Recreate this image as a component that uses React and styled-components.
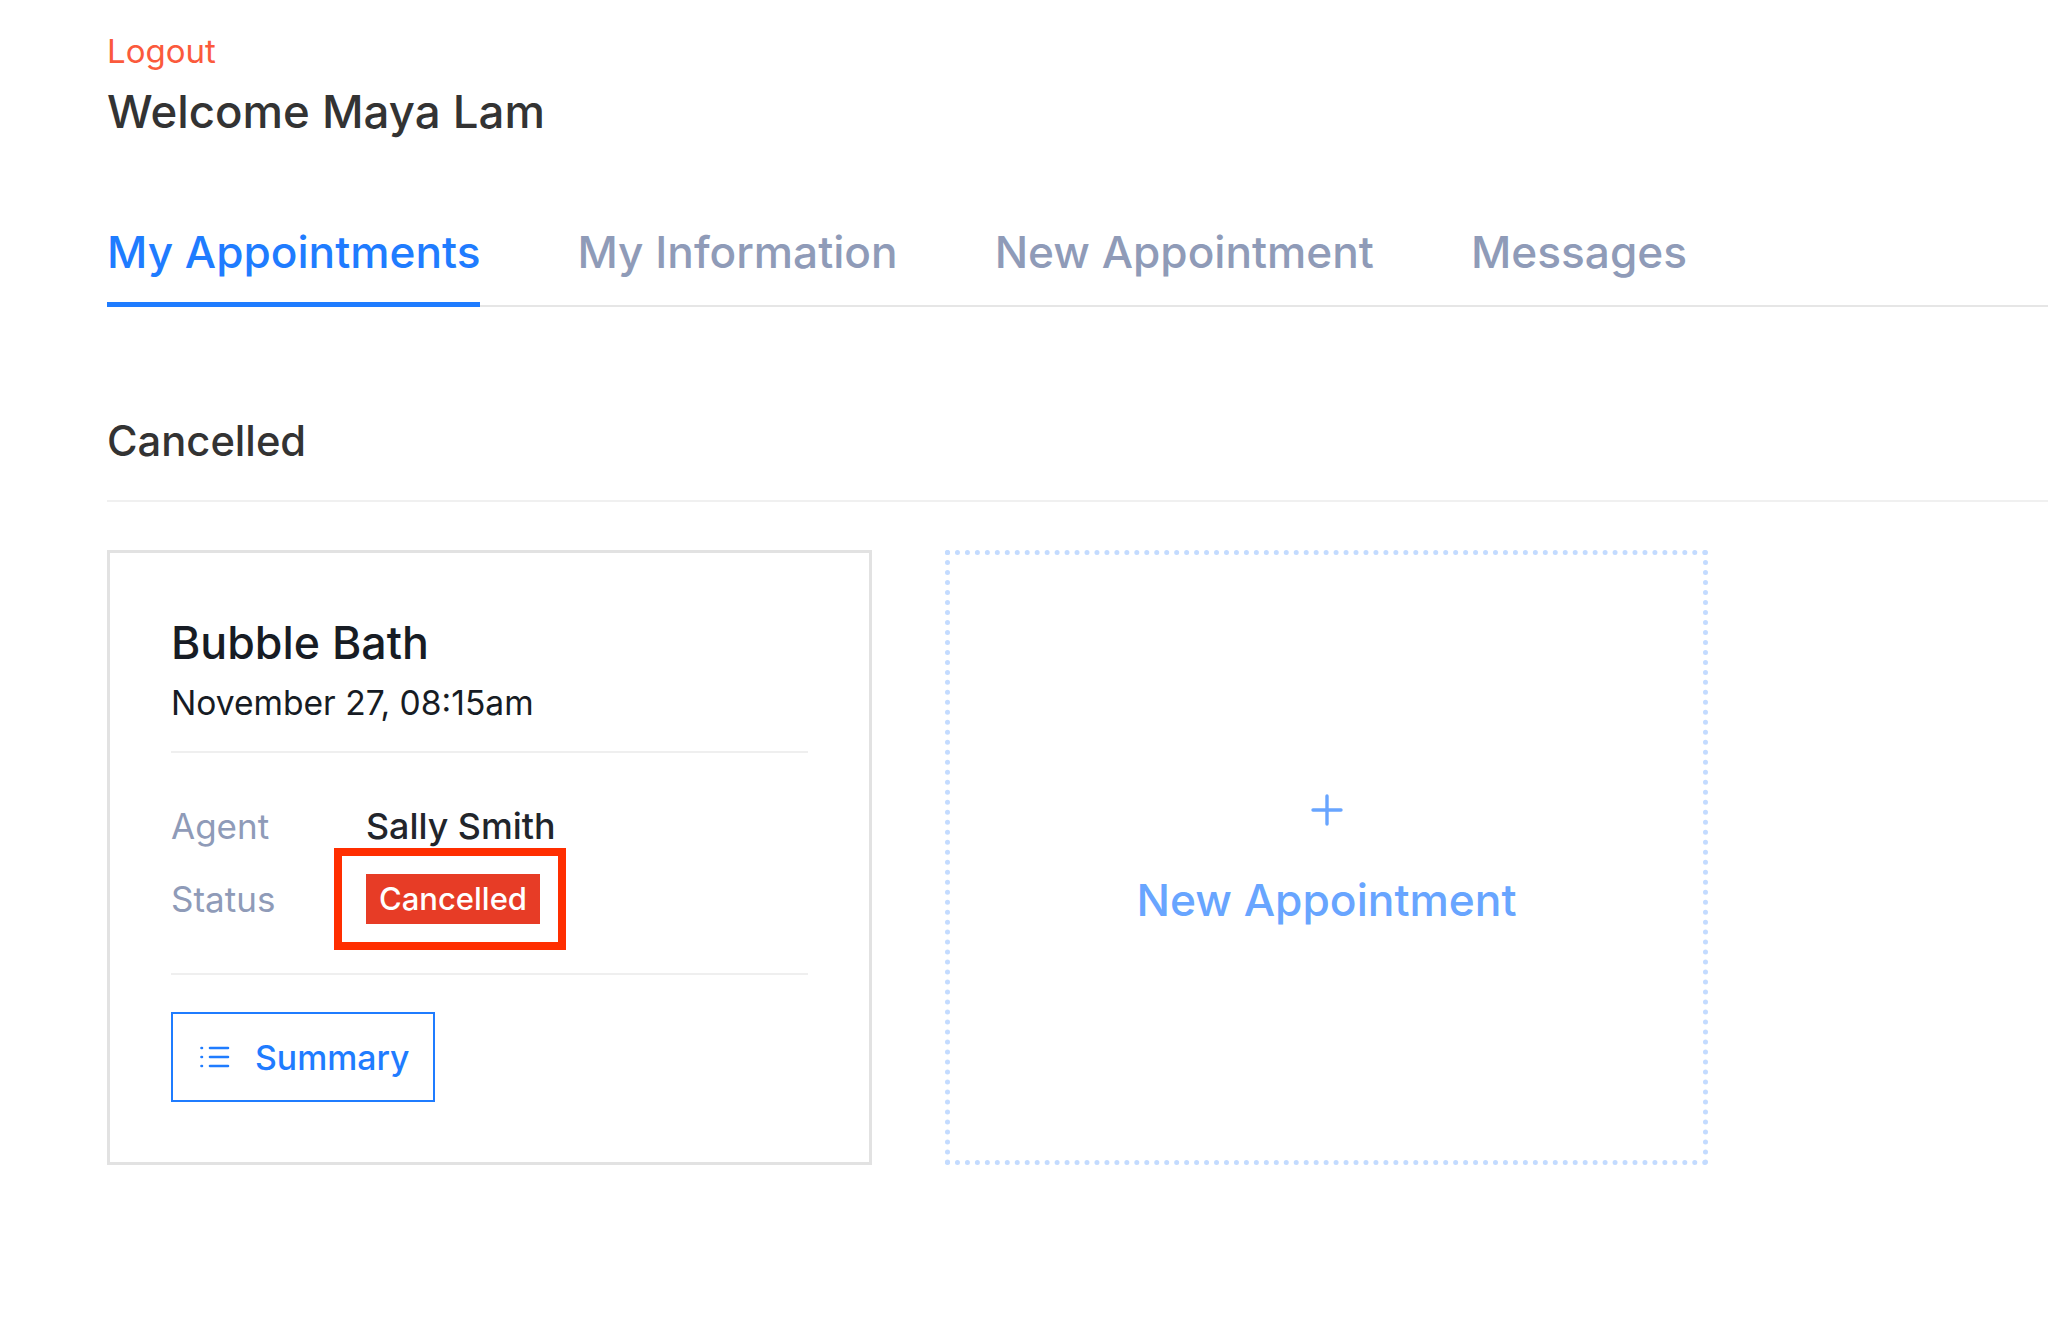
import React from 'react';
import styled, { createGlobalStyle } from 'styled-components';

const GlobalStyle = createGlobalStyle`
  html, body {
    margin: 0;
    padding: 0;
    background: #fff;
    font-family: 'Inter', 'Liberation Sans', sans-serif;
  }
`;

const Page = styled.div`
  width: 2048px;
  height: 1331px;
  box-sizing: border-box;
  padding: 30px 0 0 107px;
  overflow: hidden;
`;

const LogoutLink = styled.a`
  display: block;
  font-size: 33px;
  line-height: 42px;
  color: #fb5a3c;
`;

const Welcome = styled.h1`
  margin: 10px 0 0;
  font-size: 45.6px;
  line-height: 60px;
  font-weight: 450;
  color: #333;
`;

const Tabs = styled.div`
  display: flex;
  gap: 97px;
  margin-top: 75px;
  height: 90px;
  box-sizing: border-box;
  border-bottom: 2px solid #e6e6e6;
`;

const Tab = styled.div`
  height: 90px;
  box-sizing: border-box;
  font-size: 44.2px;
  line-height: 70px;
  font-weight: 480;
  color: ${(p) => (p.$active ? '#1f7cff' : '#8f9bb8')};
  border-bottom: ${(p) => (p.$active ? '5px solid #1f7cff' : 'none')};
`;

const SectionTitle = styled.h2`
  margin: 106px 0 0;
  font-size: 41.7px;
  line-height: 56px;
  font-weight: 480;
  color: #333;
  padding-bottom: 31px;
  border-bottom: 2px solid #f0f0f0;
`;

const Cards = styled.div`
  display: flex;
  gap: 73px;
  margin-top: 48px;
`;

const Card = styled.div`
  position: relative;
  width: 765px;
  height: 615px;
  box-sizing: border-box;
  border: 3px solid #e2e2e2;
  padding: 63px 61px 0;
`;

const CardTitle = styled.h3`
  margin: 0;
  font-size: 44.7px;
  line-height: 54px;
  font-weight: 480;
  color: #171c24;
`;

const CardDate = styled.div`
  margin-top: 10px;
  font-size: 33.6px;
  line-height: 46px;
  color: #171c24;
`;

const Divider = styled.div`
  height: 2px;
  background: #efefef;
`;

const HeadDivider = styled(Divider)`
  margin-top: 25px;
`;

const Details = styled.div`
  display: grid;
  grid-template-columns: 195px 1fr;
  grid-auto-rows: 73px;
  align-items: center;
  margin-top: 36px;
  margin-bottom: 38px;
`;

const Label = styled.div`
  font-size: 35px;
  color: #8f9bb8;
`;

const Value = styled.div`
  font-size: 35.8px;
  font-weight: 480;
  color: #22252b;
`;

const Badge = styled.span`
  display: inline-block;
  width: 174px;
  height: 50px;
  text-align: center;
  font-size: 31px;
  line-height: 50px;
  font-weight: 480;
  color: #fff;
  background: #e73c26;
`;

const Annotation = styled.div`
  position: absolute;
  left: 224px;
  top: 295px;
  width: 232px;
  height: 102px;
  box-sizing: border-box;
  border: 8px solid #ff2e00;
`;

const SummaryButton = styled.button`
  display: flex;
  align-items: center;
  gap: 25px;
  margin-top: 37px;
  width: 264px;
  height: 90px;
  box-sizing: border-box;
  padding: 0 0 0 27px;
  background: #fff;
  border: 2px solid #1f7cff;
  font-family: inherit;
  font-size: 33.8px;
  font-weight: 480;
  color: #1f7cff;
`;

const NewCard = styled.div`
  width: 763px;
  height: 615px;
  box-sizing: border-box;
  border: 5px dotted #c3dbff;
  display: flex;
  flex-direction: column;
  align-items: center;
  padding-top: 239px;
  font-size: 44.3px;
  font-weight: 480;
  color: #68a5ff;
`;

const NewLabel = styled.div`
  margin-top: 44px;
  line-height: 60px;
`;

const ListIcon = () => (
  <svg width="30" height="22" viewBox="0 0 30 22" fill="none" stroke="currentColor" strokeWidth="2.6" strokeLinecap="round">
    <path d="M10 2h18M10 11h18M10 20h18" />
    <path d="M1.5 2h.5M1.5 11h.5M1.5 20h.5" />
  </svg>
);

const PlusIcon = () => (
  <svg width="32" height="32" viewBox="0 0 32 32" fill="none" stroke="currentColor" strokeWidth="3.4" strokeLinecap="round">
    <path d="M16 2v28M2 16h28" />
  </svg>
);

const App = () => (
  <Page>
    <GlobalStyle />
    <LogoutLink>Logout</LogoutLink>
    <Welcome>Welcome Maya Lam</Welcome>
    <Tabs>
      <Tab $active>My Appointments</Tab>
      <Tab>My Information</Tab>
      <Tab>New Appointment</Tab>
      <Tab>Messages</Tab>
    </Tabs>
    <SectionTitle>Cancelled</SectionTitle>
    <Cards>
      <Card>
        <CardTitle>Bubble Bath</CardTitle>
        <CardDate>November 27, 08:15am</CardDate>
        <HeadDivider />
        <Details>
          <Label>Agent</Label>
          <Value>Sally Smith</Value>
          <Label>Status</Label>
          <Value>
            <Badge>Cancelled</Badge>
          </Value>
        </Details>
        <Annotation />
        <Divider />
        <SummaryButton>
          <ListIcon />
          Summary
        </SummaryButton>
      </Card>
      <NewCard>
        <PlusIcon />
        <NewLabel>New Appointment</NewLabel>
      </NewCard>
    </Cards>
  </Page>
);

export default App;
